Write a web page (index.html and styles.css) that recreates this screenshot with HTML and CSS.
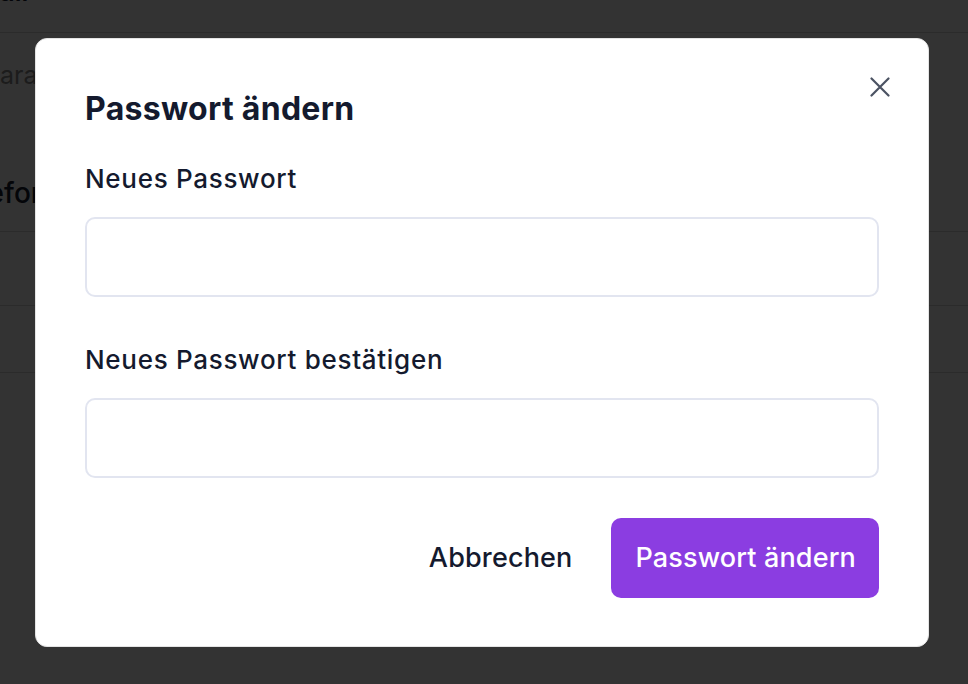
FILE: index.html
```html
<!DOCTYPE html>
<html lang="de">
<head>
    <meta charset="UTF-8">
    <meta name="viewport" content="width=device-width, initial-scale=1.0">
    <title>Profil - Passwort ändern</title>
    <link rel="stylesheet" href="styles.css">
</head>
<body>
    <div class="page">
        <div class="page-row page-row-top">
            <h2 class="page-heading">E-Mail</h2>
        </div>
        <div class="page-section">
            <p class="page-muted">Paragraph</p>
            <h3 class="page-subheading">Telefon</h3>
        </div>
        <div class="page-row page-row-a"></div>
        <div class="page-row page-row-b"></div>
    </div>

    <div class="overlay">
        <div class="modal" role="dialog" aria-labelledby="modal-title">
            <button class="modal-close" type="button" aria-label="Schließen">
                <svg width="20" height="20" viewBox="0 0 20 20" fill="none">
                    <path d="M1.5 1.5l17 17M18.5 1.5l-17 17" stroke="currentColor" stroke-width="2.2" stroke-linecap="round"/>
                </svg>
            </button>

            <h1 class="modal-title" id="modal-title">Passwort ändern</h1>

            <form class="modal-form" onsubmit="return false">
                <div class="form-group">
                    <label for="new-password">Neues Passwort</label>
                    <input type="password" id="new-password" class="form-input">
                </div>
                <div class="form-group form-group-last">
                    <label for="confirm-password">Neues Passwort bestätigen</label>
                    <input type="password" id="confirm-password" class="form-input">
                </div>

                <div class="modal-actions">
                    <button type="button" class="btn btn-cancel">Abbrechen</button>
                    <button type="submit" class="btn btn-primary">Passwort ändern</button>
                </div>
            </form>
        </div>
    </div>
</body>
</html>
```

FILE: styles.css
```css
* {
    margin: 0;
    padding: 0;
    box-sizing: border-box;
    font-family: 'Inter', 'Noto Sans', sans-serif;
}

body {
    background-color: #ffffff;
    color: #141a2e;
    overflow: hidden;
}

/* page behind the dialog */
.page {
    margin-left: -52px;
    width: 1100px;
}

.page-row {
    border-bottom: 1px solid #d6d6d6;
}

.page-row-top {
    height: 33px;
    display: flex;
    align-items: flex-end;
    overflow: hidden;
}

.page-heading {
    font-size: 26px;
    font-weight: 600;
    line-height: 1;
    margin-bottom: 27px;
}

.page-section {
    height: 199px;
    border-bottom: 1px solid #d6d6d6;
    padding-top: 24px;
}

.page-muted {
    font-size: 25px;
    color: #8a8a8a;
    line-height: 36px;
    padding-left: 36px;
}

.page-subheading {
    font-size: 28px;
    font-weight: 500;
    margin-top: 80px;
    line-height: 40px;
}

.page-row-a {
    height: 74px;
}

.page-row-b {
    height: 67px;
}

/* dialog */
.overlay {
    position: fixed;
    inset: 0;
    background: rgba(0, 0, 0, 0.8);
    display: flex;
    justify-content: center;
    align-items: center;
    padding-right: 4px;
}

.modal {
    position: relative;
    width: 894px;
    background: white;
    border: 1px solid #e4e4e4;
    border-radius: 12px;
    padding: 51px 49px 48px;
}

.modal-close {
    position: absolute;
    top: 38px;
    right: 38px;
    width: 20px;
    height: 20px;
    border: none;
    background: none;
    color: #4b5262;
    cursor: pointer;
    display: flex;
}

.modal-title {
    font-size: 32px;
    font-weight: 700;
    line-height: 38px;
    letter-spacing: 0.3px;
    color: #141a2e;
    margin-bottom: 35px;
}

.form-group {
    display: flex;
    flex-direction: column;
    margin-bottom: 47px;
}

.form-group-last {
    margin-bottom: 40px;
}

.form-group label {
    font-size: 26px;
    font-weight: 500;
    line-height: 32px;
    letter-spacing: 0.7px;
    color: #141a2e;
    margin-bottom: 22px;
}

.form-input {
    height: 80px;
    border: 2px solid #e2e5f0;
    border-radius: 10px;
    padding: 0 20px;
    font-size: 24px;
    outline: none;
}

.modal-actions {
    display: flex;
    justify-content: flex-end;
    gap: 16px;
}

.btn {
    height: 80px;
    padding: 0 23px 0 24px;
    border: none;
    border-radius: 10px;
    font-size: 27px;
    font-weight: 500;
    letter-spacing: 0.15px;
    cursor: pointer;
}

.btn-cancel {
    background: white;
    color: #141a2e;
}

.btn-primary {
    background: #8b3de1;
    color: white;
}
```
